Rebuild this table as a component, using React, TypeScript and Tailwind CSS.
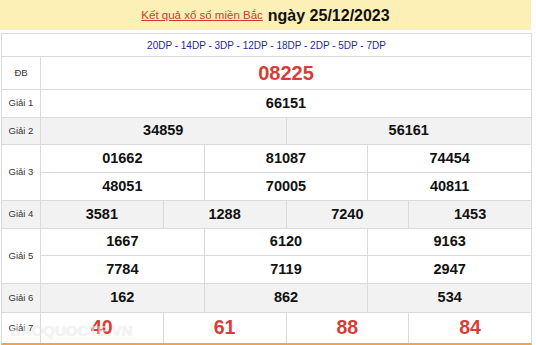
const font = { fontFamily: '"Liberation Sans", Arial, sans-serif' };

type Row = {
  label: string;
  gray?: boolean;
  lines: { nums: string[]; h: string }[];
  red?: boolean;
};

const rows: Row[] = [
  { label: "Giải 1", lines: [{ nums: ["66151"], h: "h-[27px]" }] },
  { label: "Giải 2", gray: true, lines: [{ nums: ["34859", "56161"], h: "h-[26px]" }] },
  {
    label: "Giải 3",
    lines: [
      { nums: ["01662", "81087", "74454"], h: "h-[27px]" },
      { nums: ["48051", "70005", "40811"], h: "h-[27px]" },
    ],
  },
  { label: "Giải 4", gray: true, lines: [{ nums: ["3581", "1288", "7240", "1453"], h: "h-[27px]" }] },
  {
    label: "Giải 5",
    lines: [
      { nums: ["1667", "6120", "9163"], h: "h-[26px]" },
      { nums: ["7784", "7119", "2947"], h: "h-[27px]" },
    ],
  },
  { label: "Giải 6", gray: true, lines: [{ nums: ["162", "862", "534"], h: "h-[28px]" }] },
  { label: "Giải 7", red: true, lines: [{ nums: ["40", "61", "88", "84"], h: "h-[30px]" }] },
];

function Cells({ nums, gray, red }: { nums: string[]; gray?: boolean; red?: boolean }) {
  const cols =
    nums.length === 1
      ? "grid-cols-1"
      : nums.length === 2
        ? "grid-cols-2"
        : nums.length === 3
          ? "grid-cols-3"
          : "grid-cols-4";
  return (
    <div className={`grid h-full ${cols} gap-px`}>
      {nums.map((n, i) => (
        <div
          key={i}
          className={`flex items-center justify-center font-bold ${gray ? "bg-[#f2f2f2]" : "bg-white"} ${
            red ? "text-[19.5px] text-[#d83c36]" : "text-[14.5px] text-[#111]"
          }`}
        >
          {n}
        </div>
      ))}
    </div>
  );
}

export default function App() {
  return (
    <div className="h-[345px] w-[536px] overflow-hidden bg-white" style={font}>
      <div className="flex h-[30px] w-[531px] items-center justify-center gap-[5px] bg-[#fcf0b6] pt-[1px]">
        <a href="#" className="text-[11.5px] text-[#d03a30] underline">
          Kết quả xổ số miền Bắc
        </a>
        <span className="text-[16px] font-bold text-[#111]">ngày 25/12/2023</span>
      </div>

      <div className="relative mt-[3px] ml-px w-[531px] border-x border-t border-b-2 border-[#dadada] border-b-[#f0a450] bg-[#dadada]">
        <div className="flex flex-col gap-px">
          <div className="flex h-[22px] items-center justify-center bg-white text-[10px] text-[#26269a]">
            20DP - 14DP - 3DP - 12DP - 18DP - 2DP - 5DP - 7DP
          </div>
          <div className="flex h-[32px] gap-px">
            <div className="flex w-[38px] items-center justify-center bg-white text-[9.5px] text-[#333]">ĐB</div>
            <div className="flex flex-1 items-center justify-center bg-white text-[20px] font-bold text-[#d83c36]">
              08225
            </div>
          </div>
          {rows.map((r) => (
            <div key={r.label} className="flex gap-px">
              <div
                className={`flex w-[38px] items-center justify-center text-[9.5px] text-[#333] ${
                  r.gray ? "bg-[#f2f2f2]" : "bg-white"
                }`}
              >
                {r.label}
              </div>
              <div className="flex flex-1 flex-col gap-px">
                {r.lines.map((l, i) => (
                  <div key={i} className={l.h}>
                    <Cells nums={l.nums} gray={r.gray} red={r.red} />
                  </div>
                ))}
              </div>
            </div>
          ))}
        </div>
        {/* watermark */}
        <div className="pointer-events-none absolute bottom-px left-[8px] text-[15px] font-bold text-white/50 [text-shadow:0_0_1px_rgba(140,140,140,0.25)]">
          BAOQUOCTE.VN
        </div>
      </div>
    </div>
  );
}
